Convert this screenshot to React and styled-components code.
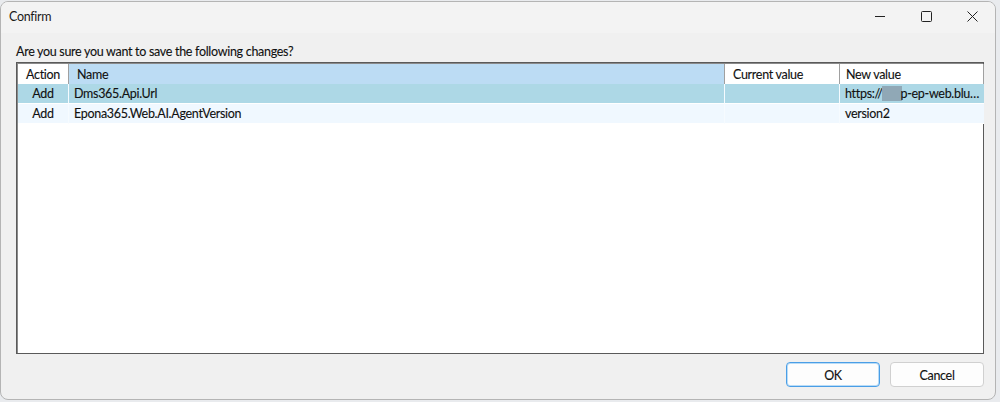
import React from 'react';
import styled, { createGlobalStyle } from 'styled-components';

const Global = createGlobalStyle`
  html, body {
    margin: 0;
    padding: 0;
    background: #e9ebee;
  }
  body {
    font-family: "Segoe UI", Lato, "Noto Sans", sans-serif;
    font-size: 12.5px;
    letter-spacing: -0.3px;
    color: #111;
    -webkit-text-stroke: 0.12px #111;
  }
`;

const Window = styled.div`
  width: 996px;
  height: 399px;
  margin: 1px 0 0 0;
  box-sizing: border-box;
  border: 1px solid #b4b4b4;
  border-radius: 8px;
  background: #f0f0f0;
  overflow: hidden;
  display: flex;
  flex-direction: column;
`;

const TitleBar = styled.div`
  height: 31px;
  flex: none;
  box-sizing: border-box;
  display: flex;
  align-items: center;
  background: #f3f3f3;
  padding: 0 0 3px 8px;
`;

const Title = styled.div`
  flex: 1;
  -webkit-text-stroke: 0;
  color: #1a1a1a;
`;

const Caption = styled.div`
  width: 46px;
  height: 28px;
  display: flex;
  align-items: center;
  justify-content: center;
`;

const Body = styled.div`
  flex: 1;
  display: flex;
  flex-direction: column;
  padding: 7px 11px 12px 15px;
`;

const Question = styled.div`
  height: 22px;
  line-height: 20px;
  padding-top: 2px;
  box-sizing: border-box;
`;

const Grid = styled.div`
  height: 292px;
  box-sizing: border-box;
  border: 1px solid #5a5a5a;
  box-shadow: inset 1px 1px 0 #8a8a8a;
  background: #fff;
  display: grid;
  grid-template-columns: 51px 656px 115px 144px;
  grid-auto-rows: 20px;
  align-content: start;
  padding: 1px 0 0 1px;
`;

const Head = styled.div`
  height: 21px;
  box-sizing: border-box;
  display: flex;
  align-items: center;
  padding-left: ${p => p.$pad || 8}px;
  background: ${p => (p.$active ? '#bcdcf4' : '#fff')};
  border-right: 1px solid #a0a0a0;
  border-bottom: 1px solid #d8d8d8;
  white-space: nowrap;
  &:last-child { border-right: none; }
`;

const Cell = styled.div`
  box-sizing: border-box;
  display: flex;
  align-items: center;
  justify-content: ${p => (p.$center ? 'center' : 'flex-start')};
  padding-left: ${p => (p.$center ? 0 : 5)}px;
  background: ${p => (p.$selected ? '#add8e6' : '#f0f8ff')};
  border-right: 1px solid #f6fbff;
  border-bottom: 1px solid #fff;
  white-space: nowrap;
  overflow: hidden;
  &:nth-child(4n) { border-right: none; }
`;

const Blur = styled.span`
  display: inline-block;
  width: 20px;
  height: 15px;
  background: #90a8b6;
  margin: 0 -1px;
  vertical-align: middle;
`;

const Footer = styled.div`
  display: flex;
  justify-content: flex-end;
  gap: 10px;
  margin-top: 8px;
`;

const Button = styled.button`
  width: 94px;
  height: 25px;
  box-sizing: border-box;
  font: inherit;
  letter-spacing: inherit;
  color: #111;
  background: #fdfdfd;
  border: 1px solid ${p => (p.$primary ? '#4a9ee6' : '#d0d0d0')};
  box-shadow: ${p => (p.$primary ? 'inset 0 0 0 1px #b9dcf7' : 'none')};
  border-radius: 4px;
  padding: 1px 0 0;
`;

const rows = [
  { action: 'Add', name: 'Dms365.Api.Url', current: '', next: 'url', selected: true },
  { action: 'Add', name: 'Epona365.Web.AI.AgentVersion', current: '', next: 'version2' },
];

export default function App() {
  return (
    <>
      <Global />
      <Window>
        <TitleBar>
          <Title>Confirm</Title>
          <Caption>
            <svg width="10" height="10" viewBox="0 0 10 10"><path d="M0 5.5h10" stroke="#222" strokeWidth="1" /></svg>
          </Caption>
          <Caption>
            <svg width="11" height="11" viewBox="0 0 11 11"><rect x="0.5" y="0.5" width="10" height="10" rx="1" fill="none" stroke="#222" strokeWidth="1" /></svg>
          </Caption>
          <Caption>
            <svg width="11" height="11" viewBox="0 0 11 11"><path d="M0.5 0.5l10 10M10.5 0.5l-10 10" stroke="#222" strokeWidth="1" /></svg>
          </Caption>
        </TitleBar>
        <Body>
          <Question>Are you sure you want to save the following changes?</Question>
          <Grid>
            <Head>Action</Head>
            <Head $active>Name</Head>
            <Head>Current value</Head>
            <Head $pad={6}>New value</Head>
            {rows.map(r => (
              <React.Fragment key={r.name}>
                <Cell $center $selected={r.selected}>{r.action}</Cell>
                <Cell $selected={r.selected}>{r.name}</Cell>
                <Cell $selected={r.selected}>{r.current}</Cell>
                <Cell $selected={r.selected}>
                  {r.next === 'url' ? (<>https://<Blur />p-ep-web.blu…</>) : r.next}
                </Cell>
              </React.Fragment>
            ))}
          </Grid>
          <Footer>
            <Button $primary>OK</Button>
            <Button>Cancel</Button>
          </Footer>
        </Body>
      </Window>
    </>
  );
}
